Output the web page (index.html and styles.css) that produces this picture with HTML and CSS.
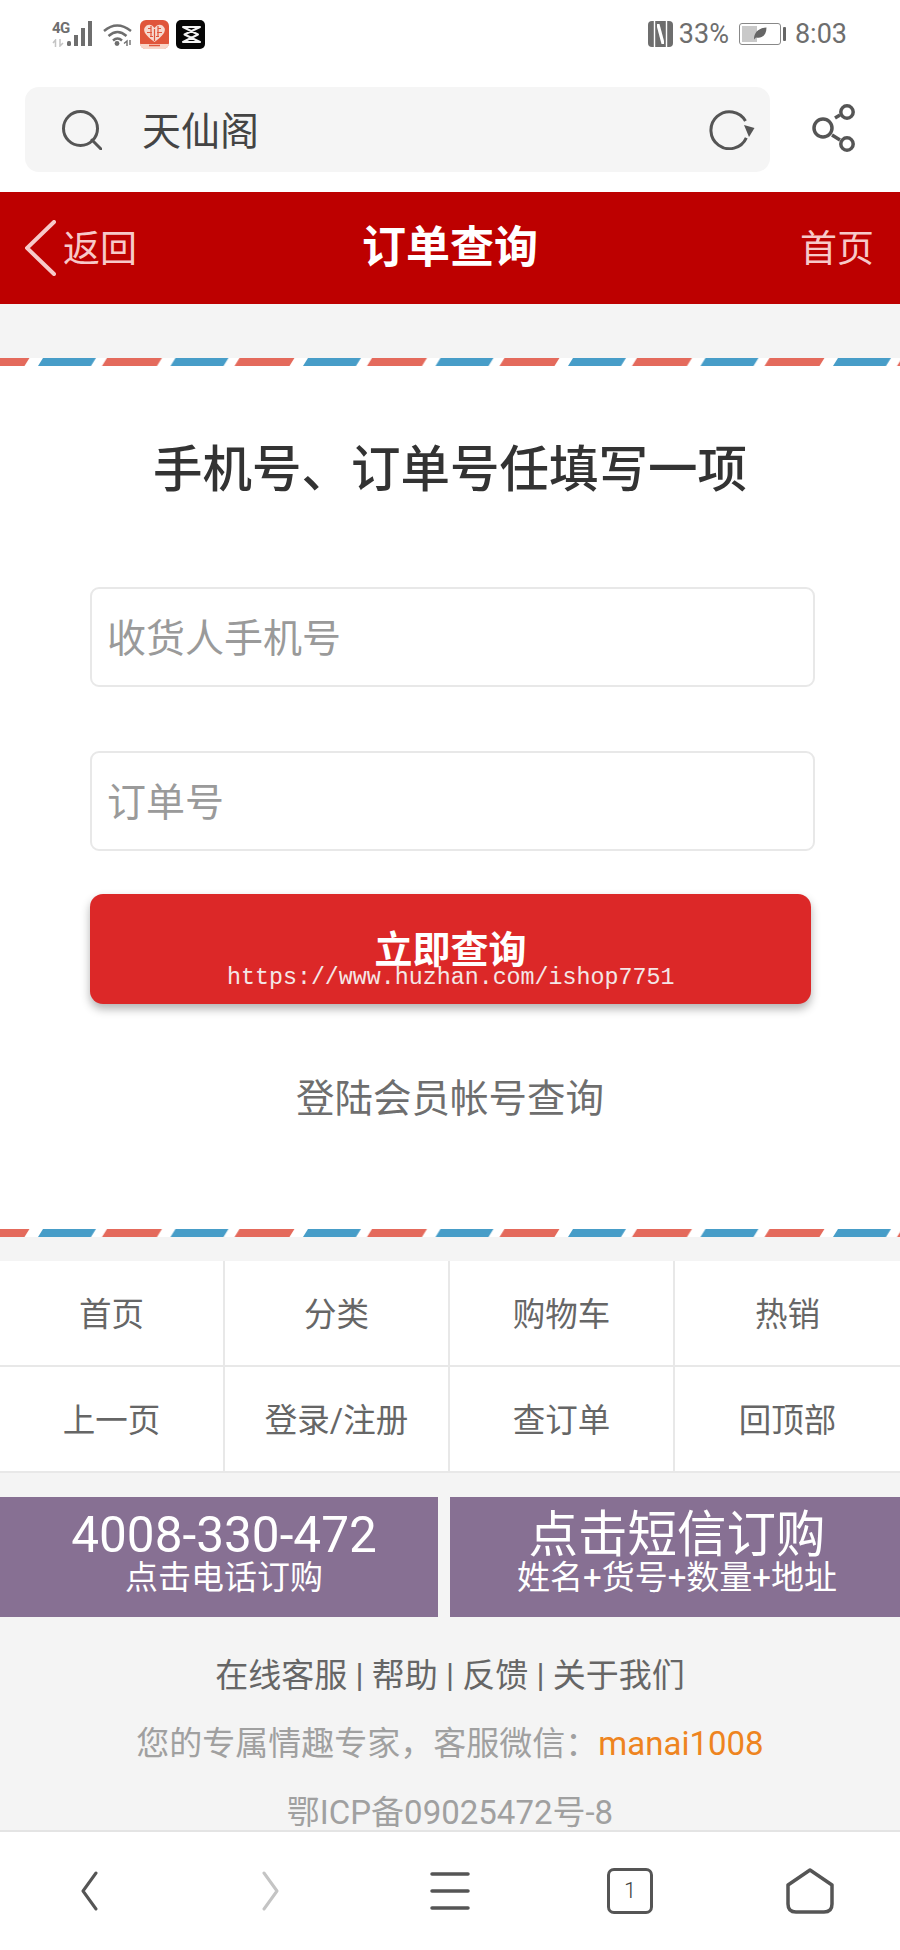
FILE: index.html
```html
<!DOCTYPE html>
<html lang="zh-CN">
<head>
    <meta charset="UTF-8">
    <meta name="viewport" content="width=device-width, initial-scale=1.0">
    <title>订单查询</title>
    <link rel="stylesheet" href="styles.css">
</head>
<body>
    <div class="status-bar">
        <div class="status-left">
            <div class="net-label"><span class="net-top">4G</span>
                <svg class="net-arrows" width="15" height="8" viewBox="0 0 15 8" fill="none" stroke="#c4c4c4" stroke-width="1.500"><path d="M1 4L3.500 1V8M8 0V7L11 4"/></svg>
            </div>
            <svg class="signal" width="26" height="26" viewBox="0 0 26 26"><g fill="#6e6e6e"><rect x="0" y="20" width="4" height="5" rx="1.500"/><rect x="7" y="14" width="4" height="11"/><rect x="14" y="7" width="4" height="18"/><rect x="21" y="0" width="4" height="25"/></g></svg>
            <svg class="wifi" width="30" height="23" viewBox="0 0 30 23" fill="none" stroke="#6e6e6e" stroke-width="2.400"><path d="M1 8Q14 -3 28 8"/><path d="M5.500 13Q14.500 5 23.500 13"/><path d="M10 17.500Q14.500 13.500 19 17.500"/><circle cx="14" cy="20.500" r="2.400" fill="#6e6e6e" stroke="none"/><path d="M21 20.500L24 18V23M27 17V22" stroke-width="1.400"/></svg>
            <svg class="app-icon" width="29" height="29" viewBox="0 0 29 29"><rect width="29" height="29" rx="6" fill="#e0553a"/><path d="M14.500 22C6 16 3 11.500 4.500 8 6.500 3.500 12 3.500 14.500 8 17 3.500 22.500 3.500 24.500 8 26 11.500 23 16 14.500 22Z" fill="#f7d9cf"/><path d="M8 8.500h3M18 8.500h3M7 12.500h5M17 12.500h5M10 16.500h3M16 16.500h3M14.500 9v12M11 6v10M18 6v10" stroke="#e0553a" stroke-width="1.200"/><path d="M0 24H29V23C29 27 26 29 23 29H6C3 29 0 27 0 23Z" fill="#f8d5c8"/><path d="M9 25.500H20" stroke="#e0553a" stroke-width="1.500"/></svg>
            <svg class="app-icon" width="29" height="29" viewBox="0 0 29 29"><rect width="29" height="29" rx="5" fill="#060606"/><path d="M7 7H24L8.500 14.500 24 22H7L22 14.500Z" fill="none" stroke="#f4f4f4" stroke-width="2" stroke-linejoin="round"/></svg>
        </div>
        <div class="status-right">
            <svg class="nfc" width="25" height="26" viewBox="0 0 25 26"><rect width="25" height="26" rx="4" fill="#6e6e6e"/><path d="M6.500 0V26M18.500 0V26" stroke="#fff" stroke-width="1.400"/><path d="M9 3H11.500L16 20V23H13.500L9 6Z" fill="#fff"/></svg>
            <span class="status-text">33%</span>
            <div class="battery">
                <div class="battery-body"><div class="battery-level"></div>
                    <svg class="leaf" width="14" height="13" viewBox="0 0 14 13"><path d="M1 12.500C1 5 6 1 13.500 .5 13.500 8 9 12 3 10.500Z" fill="#666"/></svg>
                </div>
                <div class="battery-tip"></div>
            </div>
            <span class="status-text clock">8:03</span>
        </div>
    </div>

    <div class="browser-bar">
        <div class="search-box">
            <svg class="search-icon" width="40" height="40" viewBox="0 0 40 40" fill="none" stroke="#555" stroke-width="3"><circle cx="18.500" cy="18.500" r="17"/><path d="M30 30L39 39" stroke-linecap="round"/></svg>
            <span class="search-text">天仙阁</span>
            <svg class="reload-icon" width="46" height="40" viewBox="0 0 46 40" fill="none"><path d="M36.500 11A18.500 18.500 0 1 0 37.300 27.800" stroke="#555" stroke-width="3"/><path d="M35 15L45.500 18 40 27Z" fill="#555"/></svg>
        </div>
        <svg class="share-icon" width="44" height="50" viewBox="0 0 44 50" fill="none" stroke="#555" stroke-width="3.500"><circle cx="11" cy="25" r="9"/><circle cx="35" cy="9" r="6.200"/><circle cx="35" cy="41" r="6.200"/><path d="M23 15L28 12M20 32L28 37"/></svg>
    </div>

    <header class="top-nav">
        <a class="back-link">
            <svg width="31" height="56" viewBox="0 0 31 56" fill="none" stroke="#f7c9c9" stroke-width="4" stroke-linecap="round"><path d="M29 2L2 28L29 54"/></svg>
            <span>返回</span>
        </a>
        <h1>订单查询</h1>
        <a class="home-link">首页</a>
    </header>

    <div class="gap"></div>

    <main class="query-card">
        <svg class="airmail" width="900" height="8">
            <defs>
                <pattern id="airmail-tile" x="38" y="0" width="132.500" height="8" patternUnits="userSpaceOnUse">
                    <polygon points="5,0 58,0 53,8 0,8" fill="#479dc8"/>
                    <polygon points="69,0 124,0 119,8 64,8" fill="#e46a5c"/>
                </pattern>
            </defs>
            <rect width="900" height="8" fill="url(#airmail-tile)"/>
        </svg>
        <h2>手机号、订单号任填写一项</h2>
        <div class="form-row first"><input type="text" placeholder="收货人手机号"></div>
        <div class="form-row"><input type="text" placeholder="订单号"></div>
        <div class="submit-wrap">
            <button class="submit-btn" type="button">立即查询</button>
            <span class="watermark">https://www.huzhan.com/ishop7751</span>
        </div>
        <a class="member-link">登陆会员帐号查询</a>
        <svg class="airmail bottom" width="900" height="8"><rect width="900" height="8" fill="url(#airmail-tile)"/></svg>
    </main>

    <nav class="link-grid">
        <a>首页</a><a>分类</a><a>购物车</a><a>热销</a>
        <a>上一页</a><a>登录/注册</a><a>查订单</a><a>回顶部</a>
    </nav>

    <div class="order-btns">
        <a class="order-btn">
            <span class="big">4008-330-472</span>
            <span class="small">点击电话订购</span>
        </a>
        <a class="order-btn">
            <span class="big">点击短信订购</span>
            <span class="small">姓名+货号+数量+地址</span>
        </a>
    </div>

    <footer class="site-footer">
        <p class="foot-links">在线客服 | 帮助 | 反馈 | 关于我们</p>
        <p class="foot-note">您的专属情趣专家，客服微信：<span class="wechat">manai1008</span></p>
        <p class="foot-icp">鄂ICP备09025472号-8</p>
    </footer>

    <div class="bottom-bar">
        <svg width="18" height="40" viewBox="0 0 18 40" fill="none" stroke="#555" stroke-width="3" stroke-linecap="round" stroke-linejoin="round"><path d="M15 2L2 20L15 38"/></svg>
        <svg width="18" height="40" viewBox="0 0 18 40" fill="none" stroke="#c4c4c4" stroke-width="3" stroke-linecap="round" stroke-linejoin="round"><path d="M3 2L16 20L3 38"/></svg>
        <svg width="40" height="38" viewBox="0 0 40 38" fill="none" stroke="#555" stroke-width="3.500" stroke-linecap="round"><path d="M2 2H38M2 19H38M2 36H38"/></svg>
        <div class="tab-count">1</div>
        <svg width="48" height="46" viewBox="0 0 48 46" fill="none" stroke="#555" stroke-width="3.500" stroke-linejoin="round"><path d="M24 2L46 17V36Q46 44 38 44H10Q2 44 2 36V17Z"/></svg>
    </div>
</body>
</html>
```

FILE: styles.css
```css
* {
    box-sizing: border-box;
}
html, body {
    margin: 0;
    padding: 0;
}
body {
    width: 900px;
    height: 1950px;
    overflow: hidden;
    background-color: #f4f4f4;
    font-family: Roboto, "Noto Sans CJK SC", sans-serif;
    color: #555;
}
h1, h2, p {
    margin: 0;
}

/* status bar */
.status-bar {
    height: 68px;
    background-color: #fff;
    display: flex;
    justify-content: space-between;
    align-items: center;
    padding: 0 53px 0 52px;
}
.status-left, .status-right {
    display: flex;
    align-items: center;
}
.net-label {
    display: flex;
    flex-direction: column;
    gap: 5px;
    width: 15px;
    font-size: 15px;
    line-height: 12px;
    font-weight: bold;
    color: #6e6e6e;
    letter-spacing: -0.5px;
}
.net-arrows {
    display: block;
}
.wifi {
    margin-left: 10px;
}
.app-icon {
    margin-left: 7px;
}
.status-right {
    gap: 6px;
    font-size: 27px;
    color: #6e6e6e;
}
.battery {
    display: flex;
    align-items: center;
    gap: 2px;
    margin-left: 4px;
    margin-right: 3px;
}
.battery-body {
    position: relative;
    width: 42px;
    height: 22px;
    border: 1.5px solid #888;
    border-radius: 3px;
    padding: 2px;
}
.battery-level {
    width: 15px;
    height: 100%;
    background-color: #c9c9c9;
}
.leaf {
    position: absolute;
    left: 13px;
    top: 3px;
}
.battery-tip {
    width: 3px;
    height: 14px;
    background-color: #666;
    border-radius: 1px;
}

/* browser bar */
.browser-bar {
    height: 124px;
    background-color: #fff;
    display: flex;
    align-items: flex-start;
    padding: 19px 0 0 25px;
}
.search-box {
    width: 745px;
    height: 85px;
    background-color: #f5f5f5;
    border-radius: 14px;
    display: flex;
    align-items: center;
    padding: 0 15px 0 37px;
}
.search-text {
    flex: 1;
    margin-left: 40px;
    font-size: 39px;
    color: #444;
    padding-bottom: 4px;
}
.share-icon {
    margin: 16px 0 0 42px;
}

/* red title bar */
.top-nav {
    height: 112px;
    background-color: #bd0000;
    display: flex;
    align-items: center;
    justify-content: space-between;
    padding: 0 26px 0 25px;
    position: relative;
}
.back-link {
    display: flex;
    align-items: center;
    gap: 7px;
    font-size: 37px;
    color: #f7c9c9;
}
.back-link span {
    padding-bottom: 4px;
}
.top-nav h1 {
    position: absolute;
    left: 0;
    right: 0;
    text-align: center;
    font-size: 44px;
    font-weight: bold;
    color: #fff;
    padding-bottom: 8px;
}
.home-link {
    font-size: 37px;
    color: #f7c9c9;
    padding-bottom: 4px;
}
.gap {
    height: 54px;
}

/* query card */
.query-card {
    height: 879px;
    background-color: #fff;
    display: flex;
    flex-direction: column;
    align-items: center;
}
.airmail {
    display: block;
    flex-shrink: 0;
}
.airmail.bottom {
    margin-top: auto;
}
.query-card h2 {
    margin-top: 72px;
    font-size: 49.500px;
    line-height: 64px;
    font-weight: 500;
    color: #333;
}
.form-row {
    align-self: flex-start;
    width: 725px;
    margin-top: 64px;
    margin-left: 90px;
}
.form-row.first {
    margin-top: 85px;
}
.form-row input {
    display: block;
    width: 100%;
    height: 100px;
    border: 2.500px solid #e8e8e8;
    border-radius: 9px;
    background-color: #fff;
    padding: 0 15px 4px;
    font-family: "Noto Sans CJK SC", sans-serif;
    font-size: 39px;
}
.form-row input::placeholder {
    color: #9a9a9a;
}
.submit-wrap {
    position: relative;
    align-self: flex-start;
    width: 721px;
    margin-top: 43px;
    margin-left: 90px;
}
.submit-btn {
    display: block;
    width: 100%;
    height: 110px;
    border: none;
    border-radius: 13px;
    background-color: #dc2828;
    box-shadow: 0 5px 10px rgba(0, 0, 0, 0.3);
    color: #fff;
    font-family: "Noto Sans CJK SC", sans-serif;
    font-size: 38px;
    line-height: 38px;
    font-weight: bold;
    padding: 0 0 4px;
}
.watermark {
    position: absolute;
    left: 137px;
    top: 74px;
    font-family: "Liberation Mono", monospace;
    font-size: 23.300px;
    line-height: 21px;
    color: #f4e6e6;
    white-space: nowrap;
}
.member-link {
    margin-top: 67px;
    font-size: 38.500px;
    line-height: 56px;
    color: #6e6e6e;
}

/* link grid */
.link-grid {
    margin-top: 24px;
    display: grid;
    grid-template-columns: repeat(4, 1fr);
    grid-auto-rows: 106px;
    background-color: #fff;
}
.link-grid a {
    display: flex;
    align-items: center;
    justify-content: center;
    font-size: 32.500px;
    color: #666;
    padding-bottom: 3px;
    border-right: 2.500px solid #e8e8e8;
    border-bottom: 2.500px solid #e8e8e8;
}
.link-grid a:nth-child(4n) {
    border-right: none;
}

/* purple buttons */
.order-btns {
    margin-top: 24px;
    display: flex;
    justify-content: space-between;
}
.order-btn {
    width: 438px;
    height: 120px;
    background-color: #877093;
    color: #fff;
    display: flex;
    flex-direction: column;
    align-items: center;
    padding: 13px 0 0 10px;
}
.order-btn:last-child {
    width: 450px;
    padding-left: 4px;
}
.order-btn .big {
    font-size: 49.500px;
    line-height: 50px;
}
.order-btn .small {
    font-size: 33px;
    line-height: 36px;
}

/* footer */
.site-footer {
    height: 213px;
    padding-top: 35px;
    text-align: center;
    font-size: 33px;
    line-height: 48px;
}
.foot-links {
    color: #666;
}
.foot-note {
    margin-top: 20px;
    color: #a0a0a0;
}
.wechat {
    color: #ee8420;
}
.foot-icp {
    margin-top: 21px;
    color: #a0a0a0;
}

/* bottom browser bar */
.bottom-bar {
    height: 120px;
    background-color: #fff;
    border-top: 2px solid #e4e4e4;
    display: grid;
    grid-template-columns: repeat(5, 1fr);
    justify-items: center;
    align-items: center;
}
.tab-count {
    width: 46px;
    height: 46px;
    border: 3.500px solid #555;
    border-radius: 7px;
    font-size: 22px;
    font-weight: 300;
    line-height: 39px;
    text-align: center;
    color: #444;
}
```
